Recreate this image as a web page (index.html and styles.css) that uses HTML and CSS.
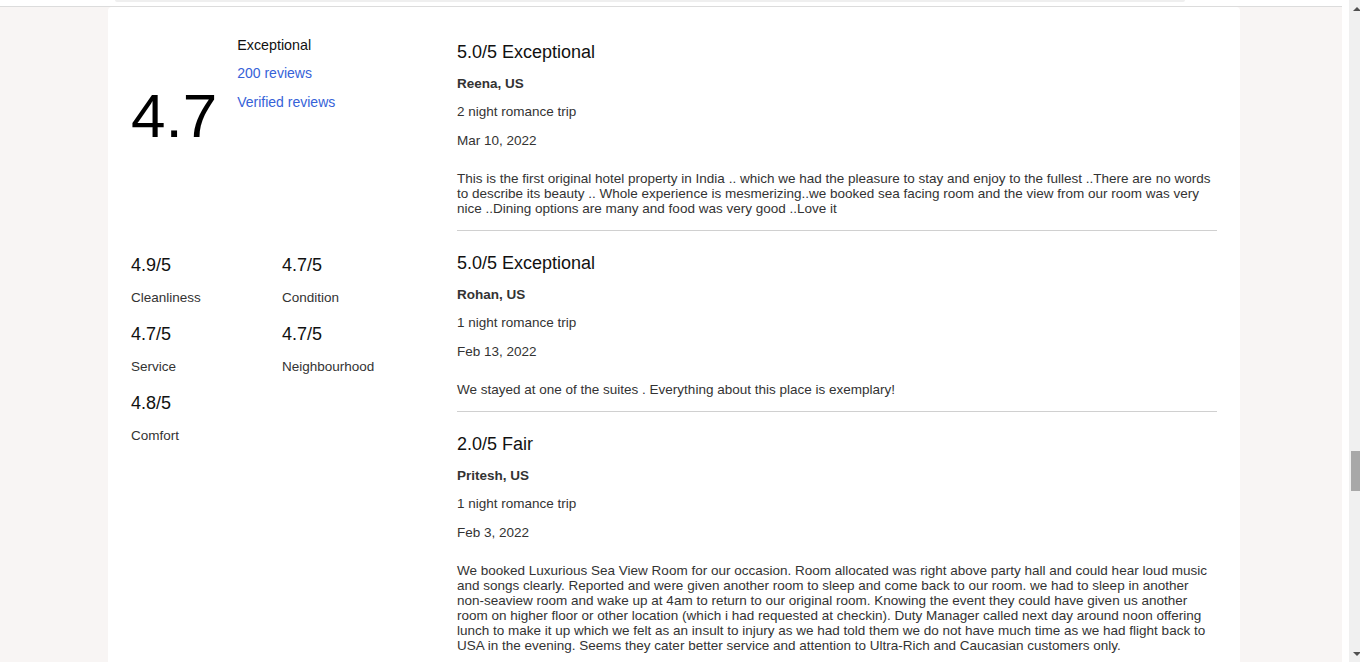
FILE: index.html
```html
<!DOCTYPE html>
<html lang="en">
<head>
<meta charset="utf-8">
<title>Reviews</title>
<link rel="stylesheet" href="styles.css">
</head>
<body>
<div class="window">
  <div class="viewport">
    <div class="topbar"><div class="searchbar"></div></div>
    <div class="page">
      <div class="card">
        <aside class="summary">
          <div class="overall">
            <div class="big-score">4.7</div>
            <div class="overall-meta">
              <div class="overall-label">Exceptional</div>
              <a class="link" href="#">200 reviews</a>
              <a class="link" href="#">Verified reviews</a>
            </div>
          </div>
          <div class="subscores">
            <div class="sub"><div class="sub-score">4.9/5</div><div class="sub-label">Cleanliness</div></div>
            <div class="sub"><div class="sub-score">4.7/5</div><div class="sub-label">Condition</div></div>
            <div class="sub"><div class="sub-score">4.7/5</div><div class="sub-label">Service</div></div>
            <div class="sub"><div class="sub-score">4.7/5</div><div class="sub-label">Neighbourhood</div></div>
            <div class="sub"><div class="sub-score">4.8/5</div><div class="sub-label">Comfort</div></div>
          </div>
        </aside>
        <section class="reviews">
          <article class="review">
            <h3 class="review-title">5.0/5 Exceptional</h3>
            <div class="review-author">Reena, US</div>
            <div class="review-trip">2 night romance trip</div>
            <div class="review-date">Mar 10, 2022</div>
            <p class="review-text">This is the first original hotel property in India .. which we had the pleasure to stay and enjoy to the fullest ..There are no words to describe its beauty .. Whole experience is mesmerizing..we booked sea facing room and the view from our room was very nice ..Dining options are many and food was very good ..Love it</p>
          </article>
          <article class="review">
            <h3 class="review-title">5.0/5 Exceptional</h3>
            <div class="review-author">Rohan, US</div>
            <div class="review-trip">1 night romance trip</div>
            <div class="review-date">Feb 13, 2022</div>
            <p class="review-text">We stayed at one of the suites . Everything about this place is exemplary!</p>
          </article>
          <article class="review">
            <h3 class="review-title">2.0/5 Fair</h3>
            <div class="review-author">Pritesh, US</div>
            <div class="review-trip">1 night romance trip</div>
            <div class="review-date">Feb 3, 2022</div>
            <p class="review-text">We booked Luxurious Sea View Room for our occasion. Room allocated was right above party hall and could hear loud music and songs clearly. Reported and were given another room to sleep and come back to our room. we had to sleep in another non-seaview room and wake up at 4am to return to our original room. Knowing the event they could have given us another room on higher floor or other location (which i had requested at checkin). Duty Manager called next day around noon offering lunch to make it up which we felt as an insult to injury as we had told them we do not have much time as we had flight back to USA in the evening. Seems they cater better service and attention to Ultra-Rich and Caucasian customers only.</p>
          </article>
        </section>
      </div>
    </div>
  </div>
  <div class="scrollgap"></div>
  <div class="scrollbar">
    <div class="arrow arrow-up"></div>
    <div class="track"><div class="thumb"></div></div>
    <div class="arrow arrow-down"></div>
  </div>
</div>
</body>
</html>
```
FILE: styles.css
```css
html, body {
  margin: 0;
  padding: 0;
  height: 662px;
  overflow: hidden;
  background: #ffffff;
  font-family: "Liberation Sans", Arial, sans-serif;
  color: #333333;
}

.window {
  display: flex;
  height: 662px;
}

.viewport {
  width: 1342px;
  flex: none;
  display: flex;
  flex-direction: column;
  background: #f8f5f4;
}

.topbar {
  height: 6px;
  background: #ffffff;
  border-bottom: 1px solid #dcdcdc;
  padding-left: 115px;
  flex: none;
}

.searchbar {
  width: 1070px;
  height: 2px;
  background: #efefef;
  border-radius: 0 0 6px 6px;
}

.page {
  flex: 1;
  padding-left: 108px;
}

.card {
  width: 1132px;
  height: 100%;
  box-sizing: border-box;
  background: #ffffff;
  border-radius: 4px 4px 0 0;
  padding: 0 23px;
  display: flex;
  gap: 20px;
}

/* Summary column */
.summary {
  width: 306px;
  flex: none;
  padding-top: 28px;
}

.overall {
  display: flex;
  gap: 20px;
  align-items: flex-start;
}

.big-score {
  font-size: 62px;
  line-height: 62px;
  color: #000000;
  margin-top: 50px;
}

.overall-meta {
  display: flex;
  flex-direction: column;
  font-size: 14px;
  line-height: 20px;
  padding-left: 0;
}

.overall-label {
  color: #111111;
  font-size: 14.3px;
}

.link {
  color: #3662d8;
  text-decoration: none;
  margin-top: 8px;
}

.link + .link {
  margin-top: 9px;
}

.subscores {
  margin-top: 107px;
  display: grid;
  grid-template-columns: 151px 151px;
  row-gap: 15px;
}

.sub-score {
  font-size: 18px;
  line-height: 22px;
  color: #111111;
}

.sub-label {
  font-size: 13.5px;
  line-height: 20px;
  margin-top: 12px;
  color: #333333;
}

/* Reviews column */
.reviews {
  width: 760px;
  flex: none;
  padding-top: 34px;
}

.review {
  padding-bottom: 14px;
  border-bottom: 1px solid #d0d0d0;
  margin-bottom: 21px;
}

.review-title {
  margin: 0;
  font-size: 18px;
  line-height: 22px;
  font-weight: normal;
  color: #111111;
}

.review-author {
  margin-top: 11px;
  font-size: 13.5px;
  line-height: 20px;
  font-weight: bold;
  color: #333333;
}

.review-trip {
  margin-top: 8px;
  font-size: 13.5px;
  line-height: 20px;
}

.review-date {
  margin-top: 9px;
  font-size: 13.5px;
  line-height: 20px;
}

.review-text {
  margin: 20px 0 0;
  font-size: 13.5px;
  line-height: 15px;
  color: #333333;
}

/* Fake scrollbar */
.scrollgap {
  width: 7px;
  flex: none;
  background: #ffffff;
}

.scrollbar {
  width: 11px;
  flex: none;
  background: #f0f0f0;
  display: flex;
  flex-direction: column;
}

.arrow {
  height: 17px;
  flex: none;
  display: flex;
  align-items: center;
  justify-content: flex-end;
}

.arrow::after {
  content: "";
  width: 0;
  height: 0;
  border-left: 4px solid transparent;
  border-right: 4px solid transparent;
  margin-right: -1px;
}

.arrow-up::after {
  border-bottom: 4px solid #505050;
}

.arrow-down::after {
  border-top: 4px solid #505050;
}

.track {
  flex: 1;
  padding-top: 434px;
}

.thumb {
  margin-left: 2px;
  height: 40px;
  background: #a8a8a8;
}
```
